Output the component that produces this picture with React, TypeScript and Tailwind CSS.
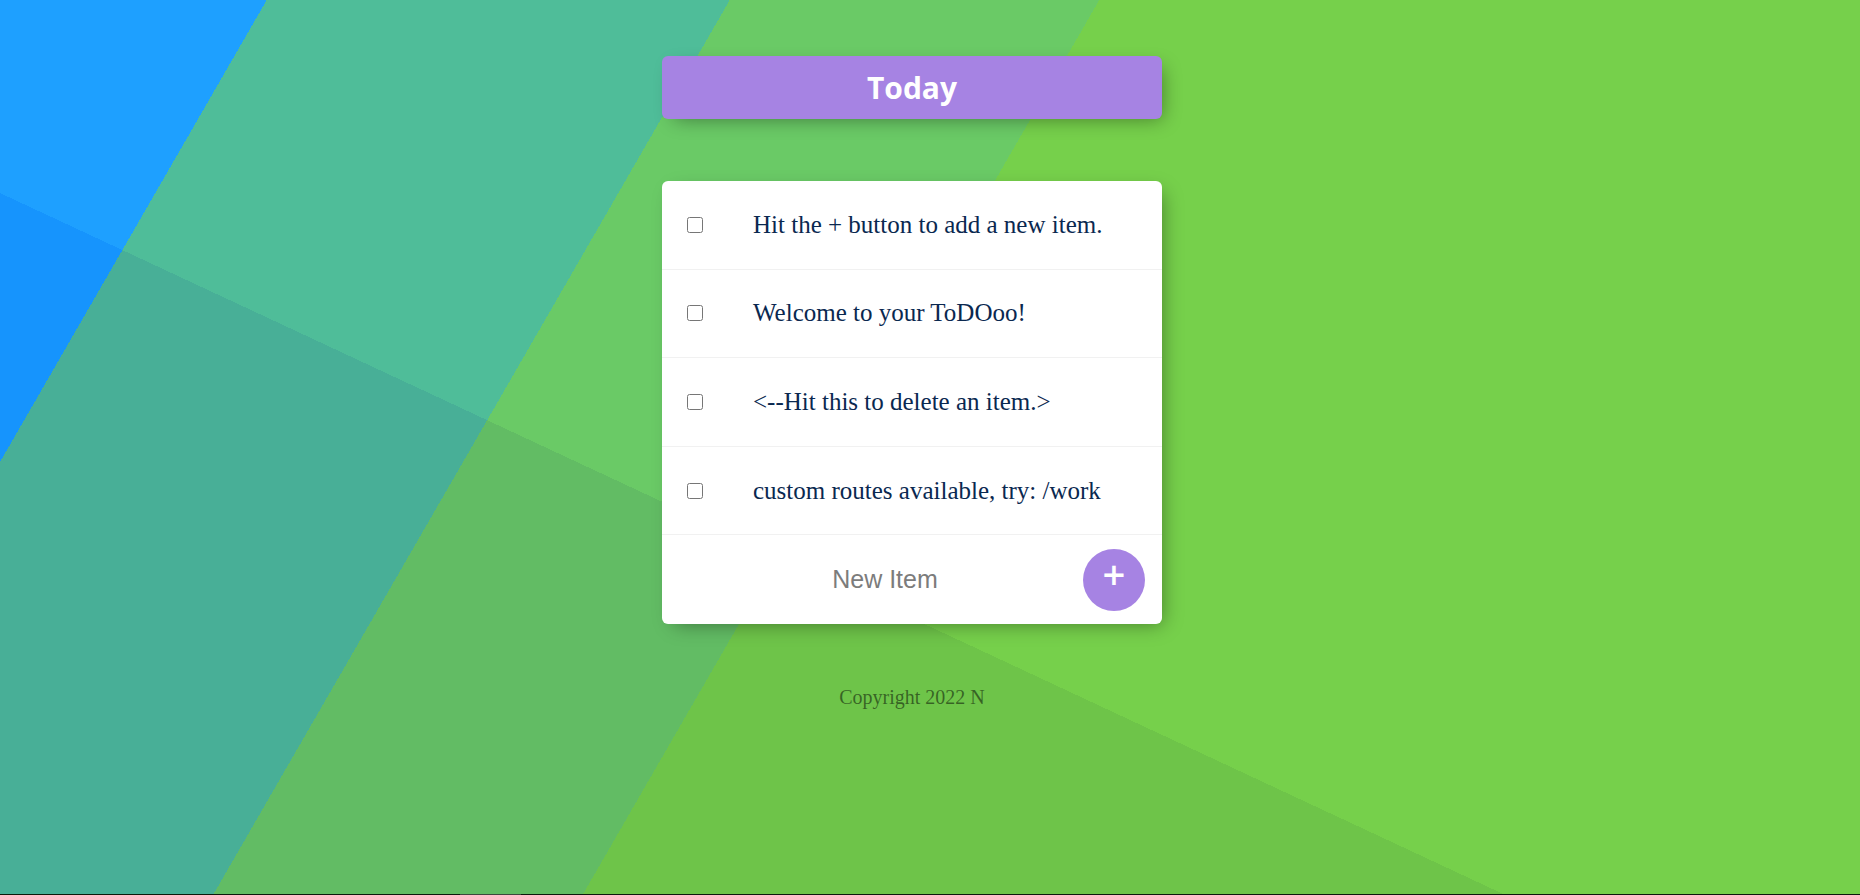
import { useState } from "react";
import type { FormEvent } from "react";

const initialItems = [
  "Hit the + button to add a new item.",
  "Welcome to your ToDOoo!",
  "<--Hit this to delete an item.>",
  "custom routes available, try: /work",
];

function Backdrop() {
  return (
    <div aria-hidden="true" className="absolute inset-0 -z-10">
      <div className="absolute inset-0 bg-[linear-gradient(120deg,#1ea0ff_231px,#4fbd99_231px,#4fbd99_632px,#6aca66_632px,#6aca66_952px,#76d04b_952px)]" />
      <div className="absolute inset-0 bg-[linear-gradient(120deg,#1694fd_231px,#48af97_231px,#48af97_632px,#62bc64_632px,#62bc64_952px,#6ec449_952px)] [mask-image:linear-gradient(205deg,transparent_961px,black_961px)]" />
    </div>
  );
}

function TodoItem({ id, text }: { id: string; text: string }) {
  return (
    <li className="flex items-center border-b border-[#f1f1f1]">
      <input id={id} type="checkbox" className="m-[25px] size-4" />
      <label htmlFor={id} className="p-[25px] text-[25px] leading-7 text-[#0a2850]">
        {text}
      </label>
    </li>
  );
}

export default function App() {
  const [items, setItems] = useState(initialItems);
  const [draft, setDraft] = useState("");

  const addItem = (event: FormEvent) => {
    event.preventDefault();
    if (!draft.trim()) return;
    setItems([...items, draft.trim()]);
    setDraft("");
  };

  return (
    <div className="relative isolate flex min-h-screen flex-col font-['Liberation_Serif',serif]">
      <Backdrop />
      <div className="flex flex-1 flex-col items-center pt-14 pr-9">
        <header className="w-full max-w-[500px] rounded-md bg-[#a683e3] px-3 py-3 text-center shadow-[6px_6px_19px_-6px_rgba(0,0,0,0.4)]">
          <h1 className="font-['Open_Sans',sans-serif] text-[30px] leading-[39px] font-bold text-white">Today</h1>
        </header>

        <main className="mt-[62px] grid min-h-[443px] w-full max-w-[500px] auto-rows-fr rounded-md bg-white shadow-[6px_6px_19px_-6px_rgba(0,0,0,0.4)]">
          <ul className="contents">
            {items.map((text, index) => (
              <TodoItem key={index} id={`item-${index}`} text={text} />
            ))}
          </ul>
          <form onSubmit={addItem} className="flex items-center pr-[17px] pl-[25px]">
            <input
              type="text"
              aria-label="New Item"
              placeholder="New Item"
              autoComplete="off"
              value={draft}
              onChange={(event) => setDraft(event.target.value)}
              className="h-[75px] min-w-0 flex-1 bg-transparent text-center font-['Liberation_Sans',sans-serif] text-[25px] outline-none placeholder:text-[#7c7c7c]"
            />
            <button
              type="submit"
              aria-label="Add item"
              className="size-[62px] shrink-0 rounded-full bg-[#a683e3] pb-3 font-['Open_Sans',sans-serif] text-[40px] leading-none font-semibold text-white"
            >
              +
            </button>
          </form>
        </main>

        <footer className="mt-[61px] text-xl leading-6 text-black/50">Copyright 2022 N</footer>
      </div>
      <div aria-hidden="true" className="flex h-px bg-[#0b1a0b]">
        <div className="ml-[460px] w-[61px] bg-[#3c4a3c]" />
      </div>
    </div>
  );
}
